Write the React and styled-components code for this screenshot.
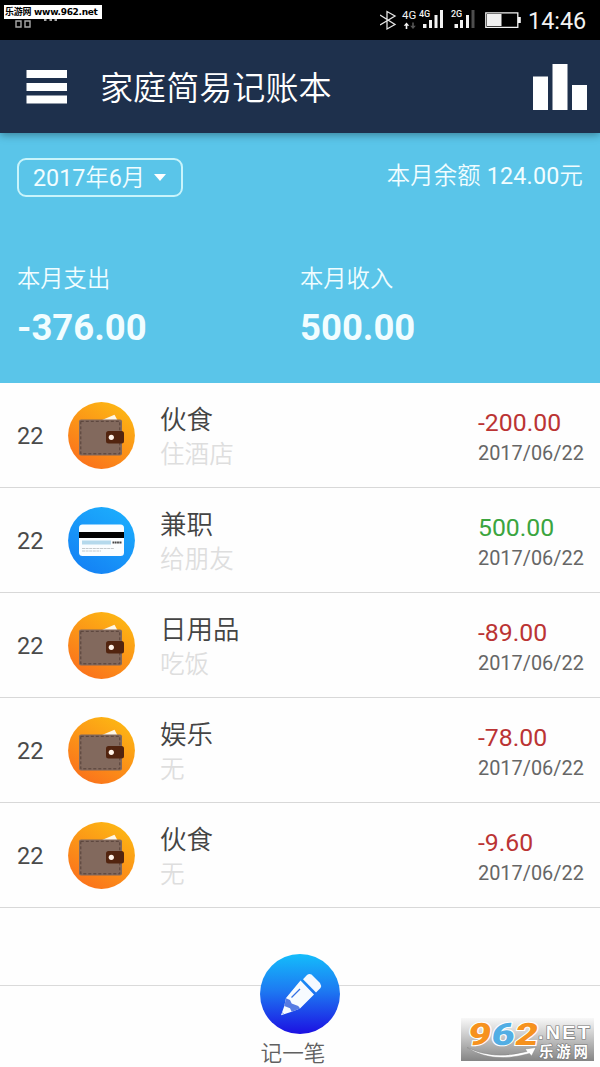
import React from 'react'
import styled, { createGlobalStyle } from 'styled-components'

const GlobalStyle = createGlobalStyle`
    * {
        box-sizing: border-box;
    }

    body {
        margin: 0;
        background: #fefefe;
        font-family: Roboto, 'Noto Sans CJK SC', sans-serif;
    }
`

const Screen = styled.div`
    position: relative;
    width: 600px;
    height: 1067px;
    overflow: hidden;
    display: flex;
    flex-direction: column;
    background: #fefefe;
`

const StatusBar = styled.div`
    height: 40px;
    flex: none;
    display: flex;
    justify-content: space-between;
    background: #000000;
`

const Clock = styled.span`
    width: 72px;
    line-height: 42px;
    font-size: 23.4px;
    color: #f2f2f2;
`

const StatusRight = styled.div`
    display: flex;
`

const SiteTag = styled.div`
    position: absolute;
    top: 5px;
    left: 4px;
    width: 98px;
    height: 14px;
    padding-left: 1px;
    display: flex;
    gap: 3px;
    background: #ffffff;
    color: #000000;
    font: bold 9px/14px 'DejaVu Sans', 'Noto Sans CJK SC', sans-serif;
    letter-spacing: -0.3px;
    white-space: nowrap;
`

const Header = styled.header`
    position: relative;
    z-index: 1;
    height: 93px;
    flex: none;
    display: flex;
    align-items: center;
    padding: 0 13px 0 26px;
    background: #1e304c;
    box-shadow: 0 2px 8px rgba(0, 0, 0, 0.35);
`

const Title = styled.h1`
    flex: 1;
    margin: 4px 0 0 33px;
    font-size: 33.1px;
    font-weight: 350;
    line-height: 48px;
    color: #ffffff;
`

const Summary = styled.section`
    height: 250px;
    flex: none;
    padding: 25px 17px 0;
    background: #5ac5e9;
    color: #f1fdff;
`

const SummaryTop = styled.div`
    display: flex;
    justify-content: space-between;
    height: 101px;
`

const MonthButton = styled.button`
    width: 166px;
    height: 39px;
    padding: 1px 0 0 14px;
    display: flex;
    align-items: center;
    gap: 9px;
    border: 2px solid #c9f4fb;
    border-radius: 9px;
    background: none;
    color: inherit;
    font: 350 23.3px/36px Roboto, 'Noto Sans CJK SC', sans-serif;
    white-space: nowrap;
`

const Digits = styled.span`
    font-weight: 400;
`

const Balance = styled.span`
    font-size: 23.3px;
    font-weight: 350;
    line-height: 36px;
    letter-spacing: 0.2px;
    white-space: nowrap;
`

const Totals = styled.div`
    display: grid;
    grid-template-columns: 283px 1fr;
`

const TotalLabel = styled.div`
    margin-top: 1px;
    font-size: 23.3px;
    font-weight: 350;
    line-height: 38px;
`

const TotalValue = styled.div`
    font-size: 36.5px;
    font-weight: 700;
    line-height: 60px;
`

const List = styled.ul`
    margin: 0;
    padding: 0;
    list-style: none;
`

const Row = styled.li`
    height: 105px;
    display: flex;
    align-items: center;
    padding: 1px 16px 0 17px;
    border-bottom: 1px solid #d8d8d8;
`

const Day = styled.span`
    width: 51px;
    font-size: 23.5px;
    color: #4a4a4a;
`

const Info = styled.div`
    flex: 1;
    margin-left: 25px;
`

const Category = styled.div`
    margin-top: 3px;
    font-size: 26.5px;
    font-weight: 350;
    line-height: 36px;
    color: #444444;
`

const Note = styled.div`
    font-size: 24.6px;
    font-weight: 350;
    line-height: 34px;
    color: #dedede;
`

const Money = styled.div`
    width: 106px;
    white-space: nowrap;
`

const Amount = styled.div`
    margin-top: 4px;
    font-size: 24.8px;
    line-height: 32px;
    color: ${({ $income }) => ($income ? '#3ba53f' : '#bb3434')};
`

const DateText = styled.div`
    font-size: 19.9px;
    line-height: 30px;
    color: #666666;
`

const Footer = styled.footer`
    height: 82px;
    flex: none;
    margin-top: auto;
    display: flex;
    flex-direction: column;
    align-items: center;
    border-top: 1px solid #dadada;
`

const AddButton = styled.button`
    width: 80px;
    height: 80px;
    flex: none;
    margin-top: -32px;
    padding: 0;
    border: 0;
    border-radius: 50%;
    background: linear-gradient(#14bdfb, #1d7bf2 45%, #1c10e2);
`

const AddLabel = styled.span`
    margin-right: 14px;
    font-size: 21.6px;
    font-weight: 350;
    line-height: 40px;
    color: #606060;
`

const Watermark = styled.div`
    position: absolute;
    left: 461px;
    top: 1018px;
    width: 133px;
    height: 43px;
    background: linear-gradient(#f8f8f8, #cccccc 40%, #858585);
`

const entries = [
    { day: 22, category: '伙食', note: '住酒店', amount: '-200.00', date: '2017/06/22' },
    { day: 22, category: '兼职', note: '给朋友', amount: '500.00', date: '2017/06/22', income: true },
    { day: 22, category: '日用品', note: '吃饭', amount: '-89.00', date: '2017/06/22' },
    { day: 22, category: '娱乐', note: '无', amount: '-78.00', date: '2017/06/22' },
    { day: 22, category: '伙食', note: '无', amount: '-9.60', date: '2017/06/22' },
]

const NotificationIcons = () => (
    <svg width="80" height="40" fill="none" stroke="#a8a8a8" strokeWidth="1.4">
        <path d="M16 13h5v5h-5zM25 13h5v5h-5zM16 21h5v6h-5zM25 21h5v6h-5z" />
        <path d="M44 20h2.500M49.500 20h2.500M54.500 20h2.500" strokeWidth="2" />
    </svg>
)

const PhoneIcons = () => (
    <svg width="148" height="40" fill="#f2f2f2" fontFamily="Roboto, sans-serif">
        <path d="M0 15l15 9.500-8 4.500V11.500l8 4.500L0 25" fill="none" stroke="#e4e4e4" strokeWidth="1.3" />
        <text x="22" y="18.500" fontSize="11.500">4G</text>
        <path d="M26.500 22.500l2.800 3.200h-2v3.300h-1.600v-3.300h-2z" />
        <path d="M33 29l-2.800-3.200h2v-3.300h1.600v3.300h2z" fill="#555555" />
        <text x="39" y="16.500" fontSize="9" fontWeight="500">4G</text>
        <path d="M43 24h3.500v4H43zM49 20h3v8h-3zM54.500 15h3v13h-3zM60 10h3v18h-3z" />
        <text x="71" y="16.500" fontSize="9" fontWeight="500">2G</text>
        <path d="M74.500 24H78v4h-3.500zM80 20h3v8h-3zM86 15h3v13h-3z" />
        <path d="M91.500 10h3v18h-3z" fill="#4d4d4d" />
        <path d="M105.800 12.800h32v14.500h-32z" fill="none" stroke="#f2f2f2" strokeWidth="1.300" />
        <path d="M107 14h14.500v12H107zM138 17h2.800v6H138z" />
    </svg>
)

const MenuIcon = () => (
    <svg width="41" height="34" fill="#ffffff">
        <path d="M.5 0H41v8H.5zM.5 13H41v8H.5zM.5 25.500H41V33.500H.5z" />
    </svg>
)

const ChartIcon = () => (
    <svg width="54" height="46" fill="#ffffff">
        <path d="M0 12.500h15V46H0zM19.500 0h15v46h-15zM39 21h15v25H39z" />
    </svg>
)

const WalletIcon = () => (
    <svg width="67" height="67" viewBox="0 0 67 67">
        <defs>
            <linearGradient id="wallet" x1="0.8" y1="0" x2="0.2" y2="1">
                <stop offset="0" stopColor="#fdb913" />
                <stop offset="1" stopColor="#fa6f1c" />
            </linearGradient>
        </defs>
        <circle cx="33.500" cy="33.500" r="33.400" fill="url(#wallet)" />
        <path d="M34 18l12.500-5.200 3 5.500z" fill="#fff7e6" />
        <rect x="11" y="17.500" width="43" height="36" rx="2" fill="#82695d" />
        <rect x="12.800" y="19.300" width="39" height="32.500" fill="none" stroke="#554039" strokeWidth="1" strokeDasharray="3 2" />
        <rect x="38" y="29" width="18" height="12.500" rx="2.500" fill="#52240f" />
        <circle cx="43.300" cy="35.300" r="2.600" fill="#fff3e8" />
    </svg>
)

const CardIcon = () => (
    <svg width="67" height="67" viewBox="0 0 67 67">
        <defs>
            <linearGradient id="card" x1="0.8" y1="0" x2="0.2" y2="1">
                <stop offset="0" stopColor="#1caefd" />
                <stop offset="1" stopColor="#1480f4" />
            </linearGradient>
        </defs>
        <circle cx="33.500" cy="33.500" r="33.400" fill="url(#card)" />
        <rect x="11" y="17.500" width="45" height="31.500" rx="3.500" fill="#fafdff" />
        <path d="M11 25h45v6H11z" fill="#000000" />
        <path d="M14 33.500h29v4H14z" fill="#b5d9ec" />
        <path d="M44.500 35.500h9.500" stroke="#444444" strokeWidth="2" strokeDasharray="1.800 .5" />
        <path d="M14 41.500h32M14 44h19" stroke="#c4c9cc" strokeWidth="1" strokeDasharray="3 .6" />
    </svg>
)

const PencilIcon = () => (
    <svg width="80" height="80" viewBox="0 0 80 80">
        <path d="M43 25.300L47 21q2-1.500 4.500-.5L60 29q1.800 2.500.5 5L56 38.500z" fill="#f4f9ff" />
        <path d="M40.500 26.500L54 40.500 40 54.500 31.700 57.800 21 61.300 24.300 52 26 44z" fill="#f7fbff" />
        <path d="M26 44.300l4 1.700 1.700 3.500 6.500 2.500 2 2.500-8.500 3.300-1.700-3.500-5.700-2.300z" fill="#567be3" />
        <path d="M22 58.500l2 1.800" stroke="#7fa0ec" strokeWidth="1" />
        <path d="M31.500 43.500L40 35" stroke="#3571e4" strokeWidth="1.300" />
    </svg>
)

const SiteLogo = () => (
    <svg width="133" height="43" viewBox="0 0 133 43" fontWeight="bold">
        <g transform="skewX(-9)" fontFamily="Roboto, sans-serif" fontSize="31" fontWeight="900" stroke="#ffffff" strokeWidth="2" paintOrder="stroke">
            <text x="10" y="26.500" fill="#f6921e" textLength="23" lengthAdjust="spacingAndGlyphs">9</text>
            <text x="33.500" y="26.500" fill="#52aee4" textLength="23" lengthAdjust="spacingAndGlyphs">6</text>
            <text x="57" y="26.500" fill="#f6921e" textLength="23" lengthAdjust="spacingAndGlyphs">2</text>
        </g>
        <g fill="#ffffff" stroke="#777777" strokeWidth="1.200" paintOrder="stroke">
            <text x="77" y="21" fontFamily="'Liberation Sans', sans-serif" fontSize="17.500" letterSpacing="2" textLength="54" lengthAdjust="spacingAndGlyphs">.NET</text>
            <text x="78" y="38.500" fontFamily="'Noto Sans CJK SC', sans-serif" fontSize="14.500" textLength="49">乐游网</text>
        </g>
        <path d="M6 29.500q26 13 60 4l-2-2.500 11-1.500-4.500 8.500-2-2.500Q31 46 6 29.500z" fill="#ffffff" stroke="#888888" strokeWidth=".5" />
    </svg>
)

const App = () => {
    return (
        <Screen>
            <GlobalStyle />
            <StatusBar>
                <NotificationIcons />
                <StatusRight>
                    <PhoneIcons />
                    <Clock>14:46</Clock>
                </StatusRight>
            </StatusBar>
            <SiteTag>
                <span>乐游网</span>
                <span>www.962.net</span>
            </SiteTag>
            <Header>
                <MenuIcon />
                <Title>家庭简易记账本</Title>
                <ChartIcon />
            </Header>
            <Summary>
                <SummaryTop>
                    <MonthButton>
                        <span><Digits>2017</Digits>年<Digits>6</Digits>月</span>
                        <svg width="12" height="8" fill="#ffffff"><path d="M0 0h12L6 7z" /></svg>
                    </MonthButton>
                    <Balance>本月余额 <Digits>124.00</Digits>元</Balance>
                </SummaryTop>
                <Totals>
                    <div>
                        <TotalLabel>本月支出</TotalLabel>
                        <TotalValue>-376.00</TotalValue>
                    </div>
                    <div>
                        <TotalLabel>本月收入</TotalLabel>
                        <TotalValue>500.00</TotalValue>
                    </div>
                </Totals>
            </Summary>
            <List>
                {entries.map((item, index) => (
                    <Row key={index}>
                        <Day>{item.day}</Day>
                        {item.income ? <CardIcon /> : <WalletIcon />}
                        <Info>
                            <Category>{item.category}</Category>
                            <Note>{item.note}</Note>
                        </Info>
                        <Money>
                            <Amount $income={item.income}>{item.amount}</Amount>
                            <DateText>{item.date}</DateText>
                        </Money>
                    </Row>
                ))}
            </List>
            <Footer>
                <AddButton>
                    <PencilIcon />
                </AddButton>
                <AddLabel>记一笔</AddLabel>
            </Footer>
            <Watermark>
                <SiteLogo />
            </Watermark>
        </Screen>
    )
}

export default App
